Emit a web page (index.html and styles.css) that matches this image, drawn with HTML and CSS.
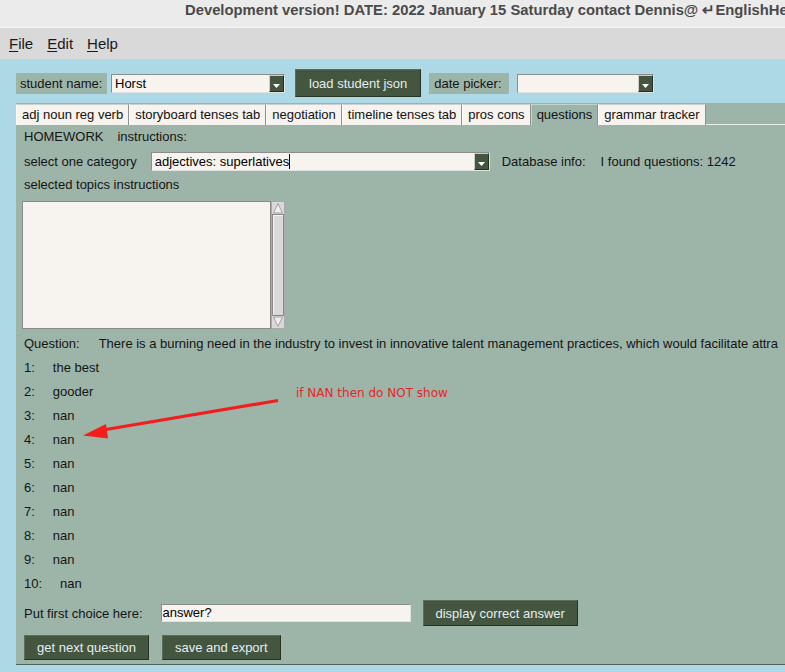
FILE: index.html
```html
<!DOCTYPE html>
<html>
<head>
<meta charset="utf-8">
<link rel="stylesheet" href="styles.css">
</head>
<body>
<div class="titlebar">Development version! DATE: 2022 January 15 Saturday contact Dennis@ ↵EnglishHe</div>
<div class="menubar">
  <span class="menu"><u>F</u>ile</span>
  <span class="menu"><u>E</u>dit</span>
  <span class="menu"><u>H</u>elp</span>
</div>
<div class="app">
  <div class="toprow">
    <span class="lbl lbl-student">student name:</span>
    <div class="combo combo-student">
      <span class="combo-text">Horst</span>
      <span class="combo-btn"><svg width="13" height="14" viewBox="0 0 13 14"><path d="M3 8h7l-3.5 4z" fill="#fff"/></svg></span>
    </div>
    <button class="btn btn-load">load student json</button>
    <span class="lbl lbl-date">date picker:</span>
    <div class="combo combo-date">
      <span class="combo-text"></span>
      <span class="combo-btn"><svg width="13" height="14" viewBox="0 0 13 14"><path d="M3 8h7l-3.5 4z" fill="#fff"/></svg></span>
    </div>
  </div>
  <div class="notebook">
    <div class="tabs">
      <span class="tab">adj noun reg verb</span>
      <span class="tab">storyboard tenses tab</span>
      <span class="tab">negotiation</span>
      <span class="tab">timeline tenses tab</span>
      <span class="tab">pros cons</span>
      <span class="tab tab-active">questions</span>
      <span class="tab">grammar tracker</span>
    </div>
    <div class="panel">
      <div class="row row-a"><span>HOMEWORK</span><span class="gap14">instructions:</span></div>
      <div class="row row-b">
        <span>select one category</span>
        <div class="combo combo-cat">
          <span class="combo-text">adjectives: superlatives<span class="caret"></span></span>
          <span class="combo-btn"><svg width="13" height="14" viewBox="0 0 13 14"><path d="M3 8h7l-3.5 4z" fill="#fff"/></svg></span>
        </div>
        <span class="dbinfo">Database info:</span>
        <span class="found">I found questions: 1242</span>
      </div>
      <div class="row row-c">selected topics instructions</div>
      <div class="textarea-wrap">
        <div class="textarea"></div>
        <div class="scrollbar">
          <svg class="sb-arrow" width="12" height="12" viewBox="0 0 12 12"><path d="M6 1.5L10.5 11H1.5z" fill="#eeeeee" stroke="#a4a4a4" stroke-width="1"/></svg>
          <div class="sb-slider"></div>
          <svg class="sb-arrow" width="12" height="12" viewBox="0 0 12 12"><path d="M6 10.5L10.5 1H1.5z" fill="#eeeeee" stroke="#a4a4a4" stroke-width="1"/></svg>
        </div>
      </div>
      <div class="row row-q"><span>Question:</span><span class="qtext">There is a burning need in the industry to invest in innovative talent management practices, which would facilitate attra</span></div>
      <div class="row ans"><span>1:</span><span>the best</span></div>
      <div class="row ans"><span>2:</span><span>gooder</span></div>
      <div class="row ans"><span>3:</span><span>nan</span></div>
      <div class="row ans"><span>4:</span><span>nan</span></div>
      <div class="row ans"><span>5:</span><span>nan</span></div>
      <div class="row ans"><span>6:</span><span>nan</span></div>
      <div class="row ans"><span>7:</span><span>nan</span></div>
      <div class="row ans"><span>8:</span><span>nan</span></div>
      <div class="row ans"><span>9:</span><span>nan</span></div>
      <div class="row ans"><span>10:</span><span>nan</span></div>
      <div class="row row-d">
        <span>Put first choice here:</span>
        <div class="entry">answer?</div>
        <button class="btn btn-display">display correct answer</button>
      </div>
      <div class="row row-e">
        <button class="btn">get next question</button>
        <button class="btn btn-save">save and export</button>
      </div>
    </div>
  </div>
</div>
<svg class="annot" width="785" height="672" viewBox="0 0 785 672">
  <line x1="278" y1="400.5" x2="100" y2="430.5" stroke="#f21d1d" stroke-width="3.2"/>
  <path d="M83 435.5L106 424L108 438.5z" fill="#f21d1d"/>
</svg>
<div class="annot-text">if NAN then do NOT show</div>
</body>
</html>
```
FILE: styles.css
```css
html, body {
  margin: 0;
  padding: 0;
}
body {
  width: 785px;
  height: 672px;
  overflow: hidden;
  background: #add8e6;
  font-family: "Liberation Sans", Arial, sans-serif;
  font-size: 13px;
  color: #141414;
}
.titlebar {
  height: 27px;
  line-height: 21px;
  background: #ebebeb;
  border-bottom: 1px solid #f7f7f7;
  padding-left: 185px;
  font-weight: bold;
  font-size: 14.8px;
  color: #4a4a4a;
  white-space: nowrap;
  overflow: hidden;
}
.menubar {
  height: 31px;
  background: #d9d9d9;
  display: flex;
  align-items: center;
  padding-left: 9px;
  font-size: 15px;
  color: #1a1a1a;
}
.menu {
  margin-right: 14px;
  line-height: 18px;
}
.menu u {
  text-underline-offset: 2px;
}
.app {
  padding-left: 16px;
}
.toprow {
  margin-top: 10px;
  height: 28px;
  display: flex;
  align-items: center;
}
.lbl {
  background: #9db5a9;
  height: 21px;
  line-height: 21px;
  box-sizing: border-box;
}
.lbl-student {
  width: 91px;
  padding-left: 4px;
}
.lbl-date {
  width: 80px;
  padding-left: 5px;
  margin-left: 8px;
}
.combo {
  display: flex;
  align-items: center;
  height: 19px;
  box-sizing: border-box;
  background: #f7f3ee;
  border: 1px solid;
  border-color: #8c8c8c #e2e2e2 #e2e2e2 #8c8c8c;
}
.combo-text {
  flex: 1;
  padding-left: 3px;
  line-height: 17px;
  white-space: nowrap;
  color: #000;
}
.combo-btn {
  width: 15px;
  height: 17px;
  box-sizing: border-box;
  background: #445640;
  border: 1px solid;
  border-color: #c9cfc7 #26301f #26301f #c9cfc7;
  display: flex;
  align-items: center;
  justify-content: center;
}
.combo-btn svg {
  display: block;
}
.combo-student {
  width: 174px;
  margin-left: 4px;
}
.combo-date {
  width: 137px;
  margin-left: 8px;
}
.combo-cat {
  width: 339px;
  margin-left: 14px;
}
.caret {
  display: inline-block;
  width: 1px;
  height: 15px;
  background: #000;
  vertical-align: -3px;
}
.btn {
  font-family: "Liberation Sans", Arial, sans-serif;
  font-size: 13px;
  color: #e4edf2;
  background: #445640;
  border: 1px solid;
  border-color: #5d6e58 #28321f #28321f #5d6e58;
  padding: 0 12px;
  margin: 0;
  cursor: default;
}
.btn-load {
  height: 28px;
  margin-left: 10px;
  padding: 0 13px;
}
.notebook {
  margin-top: 6px;
}
.tabs {
  height: 22px;
  display: flex;
  align-items: flex-end;
  background: #9db5a9;
  box-shadow: inset 0 -1px 0 #e8eee9;
}
.tab {
  height: 21px;
  line-height: 20px;
  box-sizing: border-box;
  padding: 0 5px;
  background: #f7f3ee;
  border-top: 1px solid #cfcfcf;
  border-left: 1px solid #fbfbfb;
  border-right: 1px solid #8f8f8f;
  white-space: nowrap;
  color: #111;
}
.tab-active {
  background: #9db5a9;
  border-top-color: #c4d2cb;
  border-left-color: #c4d2cb;
}
.panel {
  background: #9db5a9;
  padding: 0 0 4px 6px;
  border-bottom: 1px solid #52625b;
}
.row {
  display: flex;
  align-items: center;
  white-space: nowrap;
  margin-left: 2px;
}
.row-a {
  height: 22px;
}
.gap14 {
  margin-left: 14px;
}
.row-b {
  height: 28px;
}
.dbinfo {
  margin-left: 12px;
}
.found {
  margin-left: 15px;
}
.row-c {
  height: 18px;
}
.textarea-wrap {
  display: flex;
  margin-top: 8px;
  height: 128px;
}
.textarea {
  width: 249px;
  height: 128px;
  box-sizing: border-box;
  background: #f7f3ee;
  border: 1px solid #8a8a8a;
}
.scrollbar {
  width: 14px;
  height: 128px;
  box-sizing: border-box;
  background: #d9d9d9;
  border: 1px solid #a9a9a9;
  display: flex;
  flex-direction: column;
  align-items: center;
}
.sb-arrow {
  display: block;
  flex: none;
}
.sb-slider {
  flex: 1;
  width: 12px;
  box-sizing: border-box;
  border: 1px solid #8a8a8a;
  background: #d9d9d9;
  box-shadow: inset 1px 1px 0 #f4f4f4;
}
.row-q {
  margin-top: 2px;
  height: 24px;
}
.qtext {
  margin-left: 19px;
}
.ans {
  height: 24px;
  gap: 18px;
}
.row-d {
  margin-top: 5px;
  height: 26px;
}
.entry {
  width: 250px;
  height: 18px;
  box-sizing: border-box;
  margin-left: 18px;
  background: #f7f3ee;
  border: 1px solid;
  border-color: #8c8c8c #e2e2e2 #e2e2e2 #8c8c8c;
  line-height: 16px;
  padding-left: 1px;
  color: #000;
}
.btn-display {
  height: 26px;
  margin-left: 12px;
}
.row-e {
  margin-top: 9px;
  height: 25px;
  gap: 13px;
}
.row-e .btn {
  height: 25px;
}
.annot {
  position: absolute;
  left: 0;
  top: 0;
  pointer-events: none;
}
.annot-text {
  position: absolute;
  left: 296px;
  top: 386px;
  font-family: "DejaVu Sans", sans-serif;
  font-size: 12px;
  line-height: 14px;
  color: #e52626;
  white-space: nowrap;
}
```
